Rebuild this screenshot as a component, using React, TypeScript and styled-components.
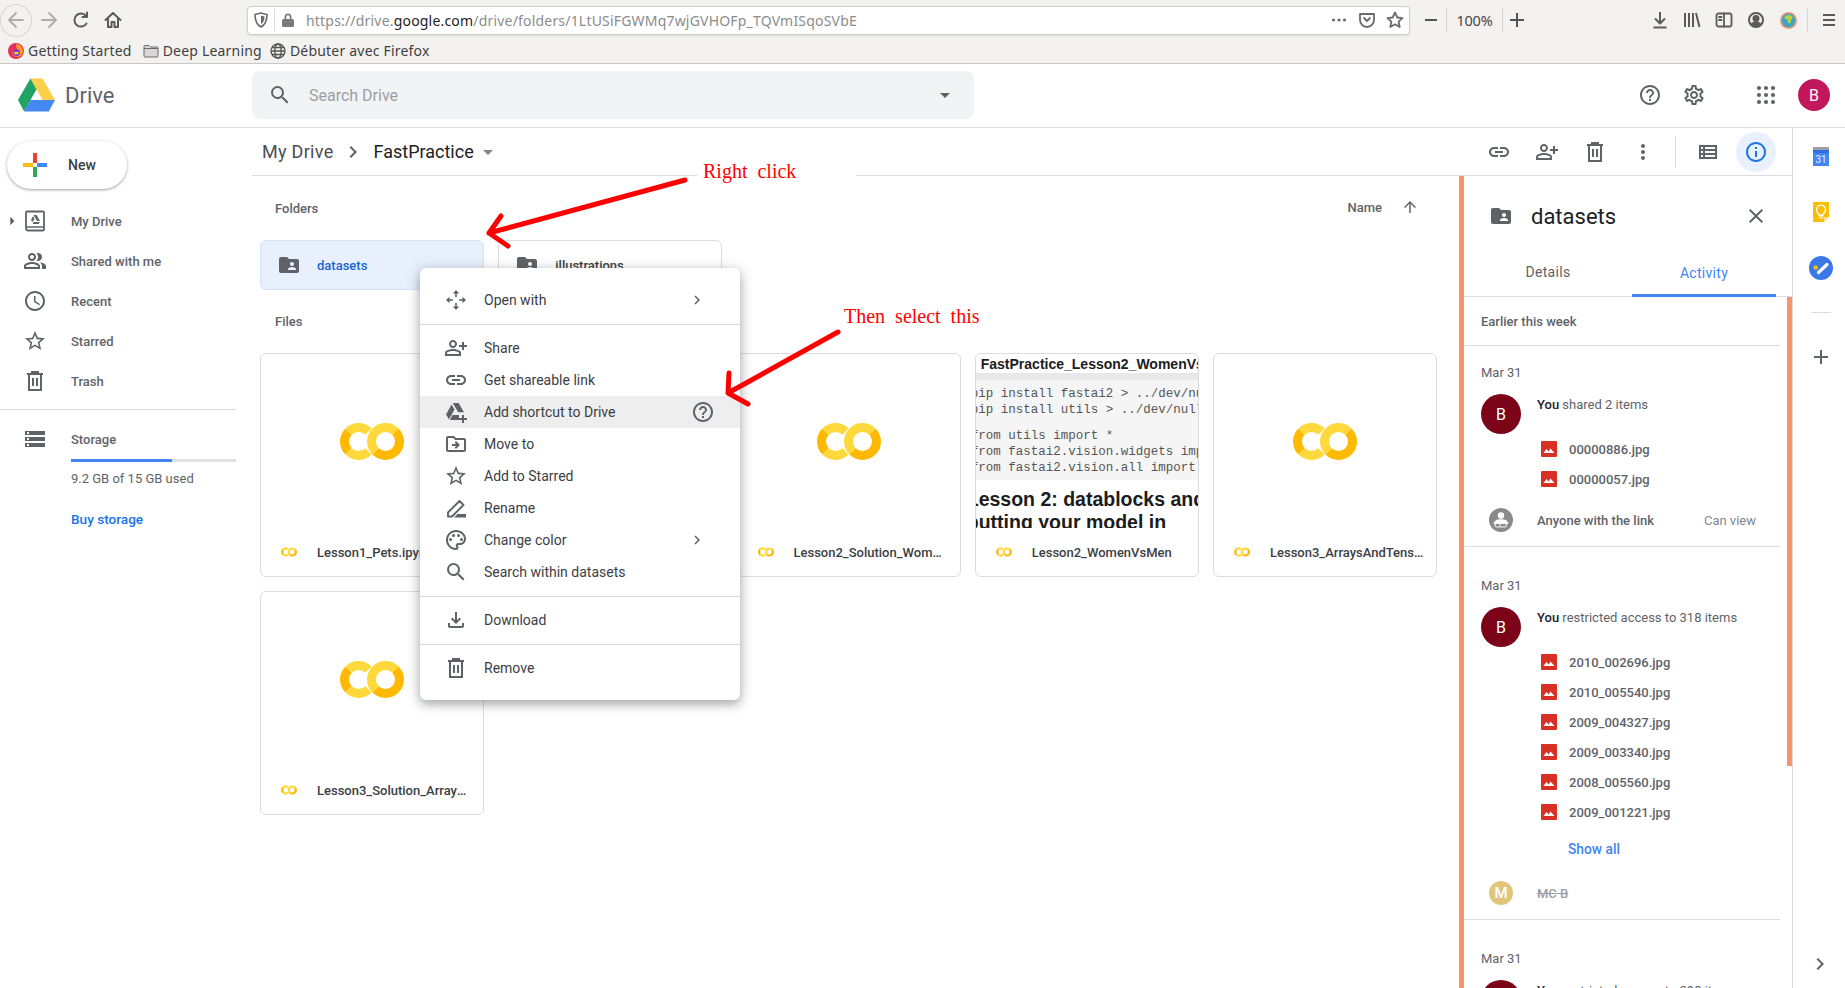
import React from 'react'
import styled, { createGlobalStyle } from 'styled-components'
import {
  MdOutlineLink, MdOutlinePersonAddAlt, MdMoreVert, MdHelpOutline, MdOutlineSettings, MdOutlineInfo,
  MdClose, MdSearch, MdStarBorder, MdOutlinePeopleAlt, MdAccessTime, MdOutlinePalette,
  MdChevronRight, MdArrowUpward, MdOutlineViewList, MdStorage, MdFolderShared,
  MdOutlineDriveFileMove, MdArrowDropDown, MdOutlineFileDownload, MdAdd, MdArrowRight,
} from 'react-icons/md'

const GlobalStyle = createGlobalStyle`
  html, body {
    margin: 0;
    padding: 0;
    background: #fff;
  }
  body {
    font-family: Roboto, "Liberation Sans", sans-serif;
    color: #3c4043;
  }
  * { box-sizing: border-box; }
`

const Root = styled.div`
  position: relative;
  width: 1845px;
  height: 988px;
  overflow: hidden;
  display: flex;
  flex-direction: column;
`

/* ---- firefox chrome ---- */
const BrowserChrome = styled.div`
  height: 64px;
  flex: none;
  background: #f3f2f0;
  border-bottom: 1px solid #c8c7c5;
`
const NavBar = styled.div`
  height: 40px;
  display: flex;
  align-items: center;
`
const ChromeBtn = styled.div<{ $w?: number; $circle?: boolean; $ml?: number; $pl?: number }>`
  width: ${p => p.$w || 32}px;
  height: 32px;
  flex: none;
  margin-left: ${p => p.$ml || 0}px;
  padding-left: ${p => p.$pl || 0}px;
  display: flex;
  align-items: center;
  justify-content: center;
  color: #5b5b5a;
  border-radius: 50%;
  ${p => p.$circle ? 'border: 1px solid #d6d5d3; height: 33px;' : ''}
`
const UrlBox = styled.div`
  width: 1163px;
  height: 29px;
  margin-left: 118px;
  flex: none;
  background: #fff;
  border: 1px solid #cfcecc;
  border-radius: 4px;
  box-shadow: 0 1px 2px rgba(0, 0, 0, .1);
  display: flex;
  align-items: center;
  padding-left: 5px;
`
const UrlSep = styled.span`
  width: 1px;
  height: 22px;
  background: #dddcda;
  margin: 0 5px;
`
const UrlText = styled.span`
  font-family: "Noto Sans", sans-serif;
  font-size: 14px;
  letter-spacing: .19px;
  color: #8c8c8c;
  margin-left: 10px;
  white-space: nowrap;
  b { font-weight: 400; color: #222; }
`
const ChromeSep = styled.span<{ $ml?: number; $mr?: number }>`
  width: 1px;
  height: 24px;
  background: #d6d5d3;
  flex: none;
  margin: 0 ${p => p.$mr || 0}px 0 ${p => p.$ml || 0}px;
`
const ZoomText = styled.span`
  width: 55px;
  text-align: center;
  font-family: "Noto Sans", sans-serif;
  font-size: 14.5px;
  letter-spacing: -.2px;
  color: #444;
`
const ChromeRight = styled.div`
  margin-left: auto;
  display: flex;
  align-items: center;
`
const BookmarkBar = styled.div`
  height: 23px;
  display: flex;
  align-items: center;
  padding: 0 0 2px 8px;
`
const Bookmark = styled.span<{ $ml?: number }>`
  display: flex;
  align-items: center;
  gap: 4px;
  margin-left: ${p => p.$ml || 0}px;
  font-family: "Noto Sans", sans-serif;
  font-size: 14px;
  letter-spacing: .2px;
  color: #3f3f3f;
  white-space: nowrap;
`

/* ---- drive header ---- */
const DriveHeader = styled.header`
  height: 64px;
  flex: none;
  display: flex;
  align-items: center;
  padding-bottom: 1px;
  border-bottom: 1px solid #dadce0;
`
const Brand = styled.div`
  width: 252px;
  flex: none;
  padding-left: 18px;
  display: flex;
  align-items: center;
  gap: 10px;
  font-size: 22px;
  color: #5f6368;
`
const SearchBox = styled.div`
  width: 722px;
  height: 48px;
  background: #f1f3f4;
  border-radius: 8px;
  display: flex;
  align-items: center;
  padding: 0 17px 0 16px;
  color: #5f6368;
`
const SearchHint = styled.span`
  margin-left: 17px;
  font-size: 16px;
  color: #9aa0a6;
  flex: 1;
`
const HeaderRight = styled.div`
  margin-left: auto;
  padding-right: 15px;
  display: flex;
  align-items: center;
`
const HeaderBtn = styled.div<{ $ml?: number }>`
  width: 40px;
  height: 40px;
  margin-left: ${p => p.$ml || 0}px;
  display: flex;
  align-items: center;
  justify-content: center;
  color: #5f6368;
`
const AccountBadge = styled.div`
  width: 32px;
  height: 32px;
  margin-left: 12px;
  border-radius: 50%;
  background: #c2185b;
  color: #fff;
  font-size: 16px;
  display: flex;
  align-items: center;
  justify-content: center;
`

/* ---- page body ---- */
const Body = styled.div`
  flex: 1;
  min-height: 0;
  display: flex;
`
const Sidebar = styled.aside`
  width: 252px;
  flex: none;
  padding-top: 13px;
`
const NewButton = styled.div`
  width: 120px;
  height: 48px;
  margin-left: 7px;
  border-radius: 24px;
  background: #fff;
  box-shadow: 0 1px 2px rgba(60, 64, 67, .3), 0 1px 3px 1px rgba(60, 64, 67, .15);
  display: flex;
  align-items: center;
  gap: 21px;
  padding-left: 16px;
  font-size: 14px;
  font-weight: 500;
  color: #3c4043;
`
const NavList = styled.nav`
  margin-top: 12px;
`
const NavItem = styled.div`
  height: 40px;
  display: grid;
  grid-template-columns: 23px 24px 1fr;
  align-items: center;
  color: #5f6368;
  font-size: 13px;
  font-weight: 500;
  span:last-child { padding-left: 24px; }
  svg { display: block; }
`
const NavCaret = styled.span`
  padding-left: 2px;
`
const SideRule = styled.div`
  width: 236px;
  height: 1px;
  margin-top: 8px;
  background: #dadce0;
`
const StorageRow = styled(NavItem)`
  height: 38px;
  margin-top: 10px;
`
const StorageBar = styled.div`
  width: 165px;
  height: 3px;
  margin: 1px 0 0 71px;
  background: #e0e0e0;
`
const StorageFill = styled.div`
  height: 100%;
  background: #4285f4;
`
const StorageText = styled.div`
  margin: 7px 0 0 71px;
  line-height: 20px;
  font-size: 13px;
  color: #5f6368;
`
const BuyLink = styled.div`
  margin: 20px 0 0 71px;
  line-height: 20px;
  font-size: 13.6px;
  font-weight: 500;
  color: #1a73e8;
`

const Workspace = styled.div`
  flex: 1;
  min-width: 0;
  display: flex;
  flex-direction: column;
`
const ActionBar = styled.div`
  height: 48px;
  flex: none;
  display: flex;
  align-items: center;
  padding-left: 10px;
  border-bottom: 1px solid #dadce0;
`
const Crumb = styled.span<{ $current?: boolean }>`
  font-size: 18px;
  color: ${p => p.$current ? '#202124' : '#4a4d51'};
  letter-spacing: ${p => p.$current ? 0 : '.3px'};
`
const CrumbSep = styled.span`
  display: flex;
  margin: 0 9px 0 7px;
  color: #5f6368;
`
const CrumbCaret = styled.span`
  display: flex;
  margin-left: 2px;
  color: #80868b;
`
const Actions = styled.div`
  margin-left: auto;
  padding-right: 16px;
  display: flex;
  align-items: center;
`
const ActionBtn = styled.div<{ $active?: boolean; $w?: number }>`
  width: ${p => p.$w || 48}px;
  height: 40px;
  display: flex;
  align-items: center;
  justify-content: center;
  color: ${p => p.$active ? '#1a73e8' : '#5f6368'};
  ${p => p.$active ? 'background: #e8f0fe; border-radius: 50%; margin-left: 4px;' : ''}
`
const ActionSep = styled.span`
  width: 1px;
  height: 32px;
  background: #dadce0;
  margin: 0 8px;
`

const Split = styled.div`
  flex: 1;
  min-height: 0;
  display: flex;
`
const Content = styled.main`
  width: 1207px;
  flex: none;
  padding-left: 8px;
`
const SectionHead = styled.div<{ $mt: number; $mb: number }>`
  height: 24px;
  margin: ${p => p.$mt}px 0 ${p => p.$mb}px;
  padding: 0 40px 0 15px;
  display: flex;
  align-items: center;
  justify-content: space-between;
  font-size: 13px;
  font-weight: 500;
  color: #5f6368;
`
const SortBy = styled.span`
  display: flex;
  align-items: center;
  gap: 19px;
  margin-top: -2px;
  svg { display: block; }
`
const CardGrid = styled.div`
  display: grid;
  grid-template-columns: repeat(5, 224px);
  column-gap: 14.25px;
  row-gap: 14px;
`
const FolderCard = styled.div<{ $selected?: boolean }>`
  height: 50px;
  display: flex;
  align-items: center;
  gap: 16px;
  padding-left: 16px;
  border: 1px solid ${p => p.$selected ? '#d2e3fc' : '#dadce0'};
  border-radius: 6px;
  background: ${p => p.$selected ? '#e8f0fe' : '#fff'};
  font-size: 13px;
  font-weight: 500;
  color: ${p => p.$selected ? '#1967d2' : '#3c4043'};
  svg { color: #5f6368; }
`
const FileCard = styled.div`
  height: 224px;
  display: flex;
  flex-direction: column;
  border: 1px solid #dadce0;
  border-radius: 6px;
  background: #fff;
  overflow: hidden;
`
const Preview = styled.div`
  flex: 1;
  min-height: 0;
  overflow: hidden;
  display: flex;
  align-items: center;
  justify-content: center;
`
const NotebookPreview = styled.div`
  flex: 1;
  min-height: 0;
  overflow: hidden;
  font-family: "Liberation Sans", sans-serif;
  color: #1c1c1c;
`
const NotebookTitle = styled.div`
  height: 19px;
  padding-left: 5px;
  font-size: 14px;
  line-height: 21px;
  font-weight: 700;
  white-space: nowrap;
`
const NotebookBand = styled.div`
  height: 7px;
  background: #e8e8e8;
`
const NotebookCode = styled.div`
  height: 100px;
  padding-top: 6px;
  background: #f5f5f5;
  font-family: "Liberation Mono", monospace;
  font-size: 12.5px;
  line-height: 16px;
  color: #555;
  white-space: pre;
  margin-left: -5px;
`
const CodeLine = styled.p<{ $gap?: boolean }>`
  margin: ${p => p.$gap ? '10px 0 0' : 0};
`
const NotebookHeading = styled.div<{ $mt: number }>`
  margin: ${p => p.$mt}px 0 0 -9px;
  font-size: 19.5px;
  line-height: 23px;
  font-weight: 700;
  white-space: nowrap;
`
const CardFooter = styled.div`
  height: 48px;
  flex: none;
  display: flex;
  align-items: center;
  gap: 20px;
  padding: 0 12px 0 20px;
  font-size: 13px;
  font-weight: 500;
  color: #3c4043;
  svg { flex: none; }
`
const FileName = styled.span`
  min-width: 0;
  overflow: hidden;
  white-space: nowrap;
  text-overflow: ellipsis;
`

/* ---- details panel ---- */
const DetailsPanel = styled.section`
  flex: 1;
  min-width: 0;
  border-left: 5px solid #f4956c;
  display: flex;
  flex-direction: column;
`
const PanelTitle = styled.div`
  height: 80px;
  flex: none;
  display: flex;
  align-items: center;
  padding: 0 24px 0 25px;
  gap: 18px;
  font-size: 22px;
  color: #202124;
  svg { color: #5f6368; flex: none; }
  svg:last-child { margin-left: auto; }
`
const Tabs = styled.div`
  height: 41px;
  flex: none;
  display: flex;
  padding-right: 16px;
  border-bottom: 1px solid #dadce0;
`
const Tab = styled.div<{ $active?: boolean; $w: number }>`
  width: ${p => p.$w}px;
  height: ${p => p.$active ? '41px' : '40px'};
  padding-bottom: 8px;
  display: flex;
  align-items: center;
  justify-content: center;
  font-size: 14px;
  letter-spacing: .3px;
  color: ${p => p.$active ? '#4285f4' : '#5f6368'};
  ${p => p.$active ? 'border-bottom: 3px solid #4285f4; padding-bottom: 5px;' : ''}
`
const Feed = styled.div`
  position: relative;
  flex: 1;
  min-height: 0;
  overflow: hidden;
`
const FeedScrollbar = styled.div`
  position: absolute;
  top: 0;
  right: 0;
  width: 5px;
  height: 469px;
  background: #f4956c;
`
const FeedDay = styled.div`
  width: 316px;
  height: 49px;
  padding-left: 17px;
  display: flex;
  align-items: center;
  border-bottom: 1px solid #dadce0;
  font-size: 13px;
  font-weight: 500;
  color: #5f6368;
`
const FeedGroup = styled.div<{ $top: number }>`
  width: 316px;
  padding: ${p => p.$top}px 0 14px 17px;
  border-bottom: 1px solid #dadce0;
`
const DateLabel = styled.div`
  line-height: 20px;
  font-size: 13px;
  color: #5f6368;
`
const ActivityRow = styled.div`
  margin-top: 11px;
  display: flex;
  gap: 16px;
`
const Avatar = styled.div<{ $size: number; $bg: string }>`
  width: ${p => p.$size}px;
  height: ${p => p.$size}px;
  flex: none;
  border-radius: 50%;
  background: ${p => p.$bg};
  color: #fff;
  font-size: ${p => p.$size > 30 ? 16 : 15}px;
  display: flex;
  align-items: center;
  justify-content: center;
`
const ActivityText = styled.div`
  line-height: 20px;
  margin-top: 1px;
  font-size: 13px;
  color: #5f6368;
  white-space: nowrap;
  b { font-weight: 500; color: #202124; }
`
const FileRow = styled.div`
  height: 30px;
  padding-left: 60px;
  display: flex;
  align-items: center;
  gap: 12px;
  font-size: 13px;
  font-weight: 500;
  color: #5f6368;
`
const ShowAll = styled.div`
  margin: 12px 0 0 87px;
  line-height: 20px;
  font-size: 13.8px;
  font-weight: 500;
  color: #4285f4;
`
const PersonRow = styled.div<{ $mt: number }>`
  height: 24px;
  margin-top: ${p => p.$mt}px;
  padding: 0 24px 0 8px;
  display: flex;
  align-items: center;
  gap: 24px;
  font-size: 13px;
  font-weight: 500;
  color: #5f6368;
`
const RevokedName = styled.span`
  color: #9aa0a6;
  text-decoration: line-through;
`
const PermissionText = styled.span`
  margin-left: auto;
  font-weight: 400;
  color: #80868b;
`

const Rail = styled.aside`
  width: 53px;
  flex: none;
  border-left: 1px solid #dadce0;
  padding: 16px 0 12px 16px;
  display: flex;
  flex-direction: column;
  align-items: flex-start;
  gap: 32px;
  color: #5f6368;
  svg { display: block; flex: none; }
`
const RailRule = styled.div`
  width: 20px;
  height: 1px;
  margin-left: 2px;
  background: #dadce0;
`
const RailFoot = styled.div`
  margin-top: auto;
  margin-left: -1px;
`

/* ---- context menu over the page ---- */
const ContextMenu = styled.div`
  position: absolute;
  left: 420px;
  top: 268px;
  width: 320px;
  height: 432px;
  padding-top: 16px;
  background: #fff;
  border-radius: 6px;
  box-shadow: 0 4px 10px rgba(60, 64, 67, .35), 0 2px 16px rgba(60, 64, 67, .2);
`
const MenuItem = styled.div<{ $hover?: boolean }>`
  height: 32px;
  display: flex;
  align-items: center;
  gap: 16px;
  padding-left: 24px;
  font-size: 14px;
  color: #3c4043;
  background: ${p => p.$hover ? '#eeeeee' : 'transparent'};
  svg { color: #5f6368; flex: none; }
`
const MenuTail = styled.span<{ $mr: number }>`
  display: flex;
  margin-left: auto;
  margin-right: ${p => p.$mr}px;
`
const MenuRule = styled.div`
  height: 1px;
  margin: 8px 0 7px;
  background: #dadce0;
`

/* ---- red notes drawn on the screenshot ---- */
const NoteLayer = styled.svg`
  position: absolute;
  left: 0;
  top: 0;
  pointer-events: none;
`
const NoteText = styled.span<{ $x: number; $y: number }>`
  position: absolute;
  left: ${p => p.$x}px;
  top: ${p => p.$y}px;
  font-family: "Liberation Serif", serif;
  font-size: 20px;
  line-height: 24px;
  word-spacing: 5px;
  color: #f00;
  white-space: nowrap;
`

const I = 24

const polar = (cx: number, cy: number, r: number, deg: number) => {
  const a = (deg - 90) * Math.PI / 180
  return `${(cx + r * Math.cos(a)).toFixed(2)} ${(cy + r * Math.sin(a)).toFixed(2)}`
}
const arc = (cx: number, cy: number, r: number, from: number, to: number) =>
  `M${polar(cx, cy, r, from)}A${r} ${r} 0 ${to - from > 180 ? 1 : 0} 1 ${polar(cx, cy, r, to)}`

const ColabLogo = ({ w = 64, h = 37 }: { w?: number; h?: number }) => (
  <svg width={w} height={h} viewBox="0 0 64 37" fill="none" strokeWidth="9">
    <path d={arc(18.5, 18.5, 14, 225, 315)} stroke="#ffb900" />
    <path d={arc(18.5, 18.5, 14, 315, 405)} stroke="#ffd93b" />
    <path d={arc(18.5, 18.5, 14, 135, 225)} stroke="#ffd93b" />
    <path d={arc(45.5, 18.5, 14, 225, 405)} stroke="#ffd93b" />
    <path d={arc(45.5, 18.5, 14, 45, 225)} stroke="#ffb900" />
  </svg>
)

const DriveLogo = () => (
  <svg width="37" height="34" viewBox="0 0 37 33">
    <path d="M12.4 0h12.2L37 21.5H24.6z" fill="#ffcf4a" />
    <path d="M12.4 0l6.1 10.7L6.2 33 0 21.5z" fill="#1fa463" />
    <path d="M12.4 21.5H37L30.8 33H6.2z" fill="#4688f1" />
  </svg>
)

const PlusMark = () => (
  <svg width="24" height="24" viewBox="0 0 24 24">
    <path d="M10 0h4v10h-4z" fill="#ea4335" />
    <path d="M14 10h10v4H14z" fill="#4285f4" />
    <path d="M10 14h4v10h-4z" fill="#34a853" />
    <path d="M0 10h10v4H0z" fill="#fbbc05" />
  </svg>
)

const TrashIcon = ({ size = 24 }: { size?: number }) => (
  <svg width={size} height={size} viewBox="0 0 24 24" fill="none" stroke="currentColor" strokeWidth="2">
    <path d="M4 5h16M9 5V3h6v2M6 5v16h12V5M10 9v8M14 9v8" />
  </svg>
)

const MoveArrowsIcon = () => (
  <svg width="24" height="24" viewBox="0 0 24 24" fill="currentColor">
    <path d="M12 4v16M4 12h16" stroke="currentColor" strokeWidth="1.600" fill="none" />
    <path d="M12 2l3.200 3.500H8.800zM12 22l-3.200-3.500h6.400zM2 12l3.500-3.200v6.400zM22 12l-3.500 3.200V8.800z" />
    <circle cx="12" cy="12" r="3" fill="#fff" />
  </svg>
)

const ShortcutIcon = () => (
  <svg width="24" height="24" viewBox="0 0 24 24" fill="currentColor">
    <path d="M8.800 3h5.800l5.400 9.300h-5.800z" />
    <path d="M7.500 4.400l3 5.200L5 19.500l-3-5z" />
    <path d="M8.500 15H15v5H6z" />
    <path d="M18 15h2v3h3v2h-3v3h-2v-3h-3v-2h3z" />
  </svg>
)

const RenameIcon = () => (
  <svg width="24" height="24" viewBox="0 0 24 24">
    <path d="M4 20.500v-4L15.500 5l4 4L8 20.500z" fill="none" stroke="currentColor" strokeWidth="1.900" strokeLinejoin="round" />
    <path d="M13.500 18H22v3.500H10z" fill="currentColor" />
  </svg>
)

const MyDriveIcon = () => (
  <svg width="24" height="24" viewBox="0 0 24 24">
    <path d="M6 2.500h14a1 1 0 011 1v17a1 1 0 01-1 1H5a2 2 0 01-2-2v-16a1 1 0 011-1z" fill="none" stroke="currentColor" strokeWidth="1.800" />
    <path d="M3 18h18" stroke="currentColor" strokeWidth="1.500" />
    <path d="M10.500 6h3l3.500 6h-3zM10 7l1.500 2.800L9.600 13 8 11zM10.700 13.100h6.200L15.500 15H9.600z" fill="currentColor" />
  </svg>
)

const ImageThumb = () => (
  <svg width="16" height="16" viewBox="0 0 16 16">
    <rect width="16" height="16" rx="1" fill="#d93025" />
    <path d="M2.500 12l3-4 2 2.400L9.500 7.500l4 4.500z" fill="#fff" />
  </svg>
)

const LinkedUser = () => (
  <svg width="24" height="24" viewBox="0 0 24 24">
    <circle cx="12" cy="12" r="12" fill="#8a8a8a" />
    <circle cx="12" cy="7.500" r="3.200" fill="#fff" />
    <path d="M4.500 16c.6-3.400 3.400-4.800 7.500-4.800s6.900 1.400 7.500 4.800z" fill="#fff" />
    <rect x="6" y="15.500" width="6.500" height="3.500" rx="1.700" fill="#8a8a8a" stroke="#fff" />
    <rect x="11" y="15.500" width="6.500" height="3.500" rx="1.700" fill="#8a8a8a" stroke="#fff" />
  </svg>
)

const AppDots = () => (
  <svg width="20" height="20" viewBox="0 0 20 20" fill="currentColor">
    {[3, 10, 17].flatMap(y => [3, 10, 17].map(x => <circle key={`${x}-${y}`} cx={x} cy={y} r="2.100" />))}
  </svg>
)

const CalendarIcon = () => (
  <svg width="24" height="24" viewBox="0 0 24 24">
    <path d="M4 3h16v4H4z" fill="#9aa0a6" />
    <path d="M4 6h16v16H4z" fill="#4285f4" />
    <path d="M4 6h16v3H4z" fill="#2f6fdc" />
    <text x="12" y="18.500" fontSize="10" textAnchor="middle" fill="#e8f0fe" fontFamily="Roboto, sans-serif">31</text>
  </svg>
)

const KeepIcon = () => (
  <svg width="24" height="24" viewBox="0 0 24 24">
    <path d="M4 2h16v15l-5 5H4z" fill="#fbbc04" />
    <path d="M15 22l5-5h-5z" fill="#fde293" />
    <path d="M9.500 16h5M10 18h4M9.600 13.500a4.500 4.500 0 114.800 0l-.4 1.500h-4z" fill="none" stroke="#fff" strokeWidth="1.200" />
  </svg>
)

const TasksIcon = () => (
  <svg width="24" height="24" viewBox="0 0 24 24">
    <circle cx="12" cy="12" r="12" fill="#3b78e7" />
    <path d="M9.500 16.500L18 8.500" stroke="#fff" strokeWidth="3.200" strokeLinecap="round" />
    <circle cx="6.700" cy="11.500" r="2.200" fill="#fbbc04" />
  </svg>
)

const FirefoxLogo = () => (
  <svg width="16" height="16" viewBox="0 0 16 16">
    <circle cx="8" cy="8" r="8" fill="#e5305e" />
    <path d="M8 1a7 7 0 017 7c0 3.500-2.500 6-5.500 6S4 12 4.500 9.500 7 7.500 8.500 8 8 4 8 1z" fill="#ff9a1f" />
    <circle cx="8.500" cy="9.500" r="3.500" fill="#7b3fc4" />
    <path d="M6 9h5l-1 2-3 .5z" fill="#ffcf3a" />
  </svg>
)

const strokeIcon = {
  fill: 'none',
  stroke: 'currentColor',
  strokeWidth: 1.800,
  strokeLinecap: 'round' as const,
  strokeLinejoin: 'round' as const,
}

const ChromeIcons = {
  back: <svg width="18" height="18" viewBox="0 0 18 18" {...strokeIcon} stroke="#adadad"><path d="M16 9H2M9 2L2 9l7 7" /></svg>,
  forward: <svg width="18" height="18" viewBox="0 0 18 18" {...strokeIcon} stroke="#adadad"><path d="M2 9h14M9 2l7 7-7 7" /></svg>,
  reload: <svg width="18" height="18" viewBox="0 0 18 18" {...strokeIcon} strokeWidth={2}><path d="M14.500 12.500a6.500 6.500 0 11-.5-7.500" /><path d="M15 1.500v4.500h-4.500" /></svg>,
  home: <svg width="18" height="18" viewBox="0 0 18 18" {...strokeIcon} strokeWidth={2}><path d="M1.500 9L9 2l7.500 7M4 8v8h3.500v-5h3v5H14V8" /></svg>,
  shield: <svg width="16" height="16" viewBox="0 0 16 16"><path d="M2 2.500L8 1l6 1.500c0 6-1.500 10-6 12.500-4.500-2.500-6-6.500-6-12.500z" fill="none" stroke="#6a6a6a" strokeWidth="1.600" /><path d="M8 3.500l3.500 1c0 3.500-1 6-3.500 7.500z" fill="#6a6a6a" /></svg>,
  lock: <svg width="16" height="16" viewBox="0 0 16 16" fill="#7a7a7a"><rect x="2" y="7" width="12" height="8" rx="1.500" /><path d="M4.500 7V5a3.500 3.500 0 017 0v2h-1.800V5a1.700 1.700 0 00-3.400 0v2z" /></svg>,
  dots: <svg width="16" height="16" viewBox="0 0 16 16" fill="#6a6a6a"><circle cx="2.500" cy="8" r="1.600" /><circle cx="8" cy="8" r="1.600" /><circle cx="13.500" cy="8" r="1.600" /></svg>,
  pocket: <svg width="18" height="18" viewBox="0 0 18 18" {...strokeIcon} stroke="#6a6a6a"><path d="M2 3h14v6a7 7 0 01-14 0zM6 7l3 3 3-3" /></svg>,
  star: <svg width="18" height="18" viewBox="0 0 18 18" {...strokeIcon} stroke="#6a6a6a"><path d="M9 1.500l2.300 5 5.200.6-3.900 3.500 1.100 5.400L9 13.300 4.300 16l1.100-5.400L1.500 7.100l5.200-.6z" /></svg>,
  minus: <svg width="14" height="14" viewBox="0 0 14 14"><path d="M1 7h12" stroke="#555" strokeWidth="2" /></svg>,
  plus: <svg width="16" height="16" viewBox="0 0 16 16"><path d="M1 8h14M8 1v14" stroke="#555" strokeWidth="2" /></svg>,
  download: <svg width="18" height="18" viewBox="0 0 18 18" {...strokeIcon} strokeWidth={2} strokeLinecap="butt"><path d="M9 1v11M4 7.500l5 5 5-5M2.500 16.500h13" /></svg>,
  library: <svg width="18" height="18" viewBox="0 0 18 18" {...strokeIcon} strokeWidth={2} strokeLinecap="butt"><path d="M2 2v14M6 2v14M10 2v14M13 2l3.500 14" /></svg>,
  sidebar: <svg width="18" height="18" viewBox="0 0 18 18" {...strokeIcon}><rect x="1.500" y="2.500" width="15" height="13" rx="2" /><path d="M9 2.500v13M4 6h2.500M4 9h2.500" /></svg>,
  account: <svg width="18" height="18" viewBox="0 0 18 18"><circle cx="9" cy="9" r="7" fill="none" stroke="currentColor" strokeWidth="2" /><circle cx="9" cy="7.500" r="3.500" fill="currentColor" /><path d="M3.500 13c1.500-2 3.500-2.500 5.500-2.500s4 .5 5.500 2.500c-1.500 2-3.500 3-5.500 3s-4-1-5.500-3z" fill="currentColor" /></svg>,
  globe: <svg width="17" height="17" viewBox="0 0 16 16"><circle cx="8" cy="8" r="8" fill="#ff9470" /><circle cx="8" cy="8" r="6.500" fill="#3ba7c4" /><path d="M5 4l4-1.500 3 2-1.500 3-1 3.500-2-1-.5-3L4 6z" fill="#c2cf3a" /></svg>,
  menu: <svg width="16" height="16" viewBox="0 0 16 16"><path d="M2 3h12M2 8h12M2 13h12" stroke="#5b5b5a" strokeWidth="2" /></svg>,
  folder: <svg width="16" height="14" viewBox="0 0 16 14"><path d="M1 2.500a1 1 0 011-1h4l1.500 1.500H14a1 1 0 011 1V12a1 1 0 01-1 1H2a1 1 0 01-1-1z" fill="#d8d7d5" stroke="#6a6a6a" /><path d="M1 4.500h14" stroke="#6a6a6a" /></svg>,
  webGlobe: <svg width="16" height="16" viewBox="0 0 16 16" fill="none" stroke="#555" strokeWidth="1.300"><circle cx="8" cy="8" r="7" /><ellipse cx="8" cy="8" rx="3.200" ry="7" /><path d="M1 8h14M2 4.500h12M2 11.500h12" /></svg>,
}

const navLinks = [
  { label: 'My Drive', icon: <MyDriveIcon />, caret: true },
  { label: 'Shared with me', icon: <MdOutlinePeopleAlt size={I} /> },
  { label: 'Recent', icon: <MdAccessTime size={I} /> },
  { label: 'Starred', icon: <MdStarBorder size={I} /> },
  { label: 'Trash', icon: <TrashIcon /> },
]

const files = [
  'Lesson1_Pets.ipynb',
  'Lesson2_Pets.ipynb',
  'Lesson2_Solution_WomenVsMen.ipynb',
  'Lesson2_WomenVsMen',
  'Lesson3_ArraysAndTensors.ipynb',
  'Lesson3_Solution_ArraysAndTensors.ipynb',
]

const restricted = ['2010_002696.jpg', '2010_005540.jpg', '2009_004327.jpg', '2009_003340.jpg', '2008_005560.jpg', '2009_001221.jpg']

const App = () => {
  return (
    <Root>
      <GlobalStyle />
      <BrowserChrome>
        <NavBar>
          <ChromeBtn $circle>{ChromeIcons.back}</ChromeBtn>
          <ChromeBtn $ml={1}>{ChromeIcons.forward}</ChromeBtn>
          <ChromeBtn>{ChromeIcons.reload}</ChromeBtn>
          <ChromeBtn>{ChromeIcons.home}</ChromeBtn>
          <UrlBox>
            {ChromeIcons.shield}
            <UrlSep />
            {ChromeIcons.lock}
            <UrlText>https://drive.<b>google.com</b>/drive/folders/1LtUSiFGWMq7wjGVHOFp_TQVmISqoSVbE</UrlText>
            <ChromeRight>
              <ChromeBtn $w={28}>{ChromeIcons.dots}</ChromeBtn>
              <ChromeBtn $w={28}>{ChromeIcons.pocket}</ChromeBtn>
              <ChromeBtn $w={28}>{ChromeIcons.star}</ChromeBtn>
            </ChromeRight>
          </UrlBox>
          <ChromeBtn $w={36} $pl={6}>{ChromeIcons.minus}</ChromeBtn>
          <ChromeSep />
          <ZoomText>100%</ZoomText>
          <ChromeSep />
          <ChromeBtn $w={28}>{ChromeIcons.plus}</ChromeBtn>
          <ChromeRight>
            <ChromeBtn>{ChromeIcons.download}</ChromeBtn>
            <ChromeBtn>{ChromeIcons.library}</ChromeBtn>
            <ChromeBtn>{ChromeIcons.sidebar}</ChromeBtn>
            <ChromeBtn>{ChromeIcons.account}</ChromeBtn>
            <ChromeBtn>{ChromeIcons.globe}</ChromeBtn>
            <ChromeSep $ml={3} $mr={5} />
            <ChromeBtn>{ChromeIcons.menu}</ChromeBtn>
          </ChromeRight>
        </NavBar>
        <BookmarkBar>
          <Bookmark><FirefoxLogo />Getting Started</Bookmark>
          <Bookmark $ml={11}>{ChromeIcons.folder}Deep Learning</Bookmark>
          <Bookmark $ml={8}>{ChromeIcons.webGlobe}Débuter avec Firefox</Bookmark>
        </BookmarkBar>
      </BrowserChrome>

      <DriveHeader>
        <Brand><DriveLogo />Drive</Brand>
        <SearchBox>
          <MdSearch size={24} />
          <SearchHint>Search Drive</SearchHint>
          <MdArrowDropDown size={24} />
        </SearchBox>
        <HeaderRight>
          <HeaderBtn><MdHelpOutline size={I} /></HeaderBtn>
          <HeaderBtn $ml={4}><MdOutlineSettings size={I} /></HeaderBtn>
          <HeaderBtn $ml={32}><AppDots /></HeaderBtn>
          <AccountBadge>B</AccountBadge>
        </HeaderRight>
      </DriveHeader>

      <Body>
        <Sidebar>
          <NewButton><PlusMark />New</NewButton>
          <NavList>
            {navLinks.map(link => (
              <NavItem key={link.label}>
                <NavCaret>{link.caret && <MdArrowRight size={20} />}</NavCaret>
                {link.icon}
                <span>{link.label}</span>
              </NavItem>
            ))}
          </NavList>
          <SideRule />
          <StorageRow>
            <span />
            <MdStorage size={I} />
            <span>Storage</span>
          </StorageRow>
          <StorageBar><StorageFill style={{ width: `${(9.2 / 15) * 100}%` }} /></StorageBar>
          <StorageText>9.2 GB of 15 GB used</StorageText>
          <BuyLink>Buy storage</BuyLink>
        </Sidebar>

        <Workspace>
          <ActionBar>
            <Crumb>My Drive</Crumb>
            <CrumbSep><MdChevronRight size={I} /></CrumbSep>
            <Crumb $current>FastPractice</Crumb>
            <CrumbCaret><MdArrowDropDown size={I} /></CrumbCaret>
            <Actions>
              <ActionBtn><MdOutlineLink size={I} /></ActionBtn>
              <ActionBtn><MdOutlinePersonAddAlt size={I} /></ActionBtn>
              <ActionBtn><TrashIcon /></ActionBtn>
              <ActionBtn><MdMoreVert size={I} /></ActionBtn>
              <ActionSep />
              <ActionBtn><MdOutlineViewList size={I} /></ActionBtn>
              <ActionBtn $active $w={40}><MdOutlineInfo size={I} /></ActionBtn>
            </Actions>
          </ActionBar>

          <Split>
            <Content>
              <SectionHead $mt={20} $mb={20}>
                Folders
                <SortBy>Name <MdArrowUpward size={18} /></SortBy>
              </SectionHead>
              <CardGrid>
                <FolderCard $selected><MdFolderShared size={I} />datasets</FolderCard>
                <FolderCard><MdFolderShared size={I} />illustrations</FolderCard>
              </CardGrid>
              <SectionHead $mt={19} $mb={20}>Files</SectionHead>
              <CardGrid>
                {files.map(name => (
                  <FileCard key={name}>
                    {name === 'Lesson2_WomenVsMen' ? (
                      <NotebookPreview>
                        <NotebookTitle>FastPractice_Lesson2_WomenVsMen</NotebookTitle>
                        <NotebookBand />
                        <NotebookCode>
                          <CodeLine>pip install fastai2 {'>'} ../dev/null</CodeLine>
                          <CodeLine>pip install utils {'>'} ../dev/null</CodeLine>
                          <CodeLine $gap>from utils import *</CodeLine>
                          <CodeLine>from fastai2.vision.widgets import *</CodeLine>
                          <CodeLine>from fastai2.vision.all import *</CodeLine>
                        </NotebookCode>
                        <NotebookHeading $mt={8}>Lesson 2: datablocks and</NotebookHeading>
                        <NotebookHeading $mt={0}>putting your model in</NotebookHeading>
                      </NotebookPreview>
                    ) : (
                      <Preview><ColabLogo /></Preview>
                    )}
                    <CardFooter>
                      <ColabLogo w={16} h={10} />
                      <FileName>{name}</FileName>
                    </CardFooter>
                  </FileCard>
                ))}
              </CardGrid>
            </Content>

            <DetailsPanel>
              <PanelTitle>
                <MdFolderShared size={I} />
                datasets
                <MdClose size={I} />
              </PanelTitle>
              <Tabs>
                <Tab $w={168}>Details</Tab>
                <Tab $active $w={144}>Activity</Tab>
              </Tabs>
              <Feed>
                <FeedScrollbar />
                <FeedDay>Earlier this week</FeedDay>
                <FeedGroup $top={17}>
                  <DateLabel>Mar 31</DateLabel>
                  <ActivityRow>
                    <Avatar $size={40} $bg="#7b0419">B</Avatar>
                    <ActivityText><b>You</b> shared 2 items</ActivityText>
                  </ActivityRow>
                  <FileRow><ImageThumb />00000886.jpg</FileRow>
                  <FileRow><ImageThumb />00000057.jpg</FileRow>
                  <PersonRow $mt={14}>
                    <LinkedUser />
                    Anyone with the link
                    <PermissionText>Can view</PermissionText>
                  </PersonRow>
                </FeedGroup>
                <FeedGroup $top={29}>
                  <DateLabel>Mar 31</DateLabel>
                  <ActivityRow>
                    <Avatar $size={40} $bg="#7b0419">B</Avatar>
                    <ActivityText><b>You</b> restricted access to 318 items</ActivityText>
                  </ActivityRow>
                  {restricted.map(name => <FileRow key={name}><ImageThumb />{name}</FileRow>)}
                  <ShowAll>Show all</ShowAll>
                  <PersonRow $mt={22}>
                    <Avatar $size={24} $bg="#e0c57d">M</Avatar>
                    <RevokedName>MC B</RevokedName>
                  </PersonRow>
                </FeedGroup>
                <FeedGroup $top={29}>
                  <DateLabel>Mar 31</DateLabel>
                  <ActivityRow>
                    <Avatar $size={40} $bg="#7b0419">B</Avatar>
                    <ActivityText><b>You</b> restricted access to 298 items</ActivityText>
                  </ActivityRow>
                </FeedGroup>
              </Feed>
            </DetailsPanel>
          </Split>
        </Workspace>

        <Rail>
          <CalendarIcon />
          <KeepIcon />
          <TasksIcon />
          <RailRule />
          <MdAdd size={I} />
          <RailFoot><MdChevronRight size={I} /></RailFoot>
        </Rail>
      </Body>

      <ContextMenu>
        <MenuItem><MoveArrowsIcon />Open with<MenuTail $mr={34}><MdChevronRight size={18} /></MenuTail></MenuItem>
        <MenuRule />
        <MenuItem><MdOutlinePersonAddAlt size={I} />Share</MenuItem>
        <MenuItem><MdOutlineLink size={I} />Get shareable link</MenuItem>
        <MenuItem $hover><ShortcutIcon />Add shortcut to Drive<MenuTail $mr={25}><MdHelpOutline size={I} /></MenuTail></MenuItem>
        <MenuItem><MdOutlineDriveFileMove size={I} />Move to</MenuItem>
        <MenuItem><MdStarBorder size={I} />Add to Starred</MenuItem>
        <MenuItem><RenameIcon />Rename</MenuItem>
        <MenuItem><MdOutlinePalette size={I} />Change color<MenuTail $mr={34}><MdChevronRight size={18} /></MenuTail></MenuItem>
        <MenuItem><MdSearch size={I} />Search within datasets</MenuItem>
        <MenuRule />
        <MenuItem><MdOutlineFileDownload size={I} />Download</MenuItem>
        <MenuRule />
        <MenuItem><TrashIcon />Remove</MenuItem>
      </ContextMenu>

      <NoteLayer width="1845" height="988" fill="none" stroke="#f00" strokeWidth="5" strokeLinecap="round" strokeLinejoin="round">
        <path d="M697 175h159" stroke="#fff" strokeWidth="3" strokeLinecap="butt" />
        <path d="M685 180L489 233M501 216L489 233L508 246" />
        <path d="M838 332L728 393M729 373L728 393L748 404" />
      </NoteLayer>
      <NoteText $x={703} $y={159}>Right click</NoteText>
      <NoteText $x={844} $y={304}>Then select this</NoteText>
    </Root>
  )
}

export default App
